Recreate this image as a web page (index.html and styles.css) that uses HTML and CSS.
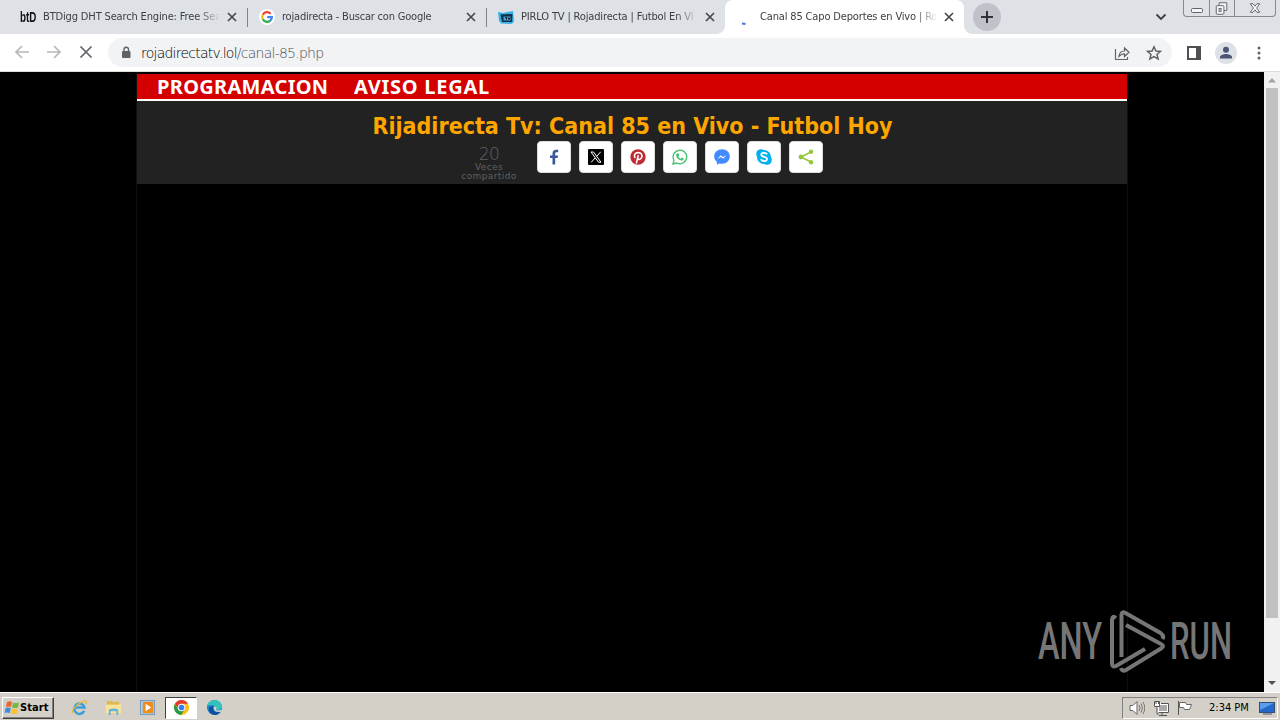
FILE: index.html
```html
<!DOCTYPE html>
<html lang="es">
<head>
    <meta charset="UTF-8">
    <meta name="viewport" content="width=device-width, initial-scale=1.0">
    <title>Canal 85 Capo Deportes en Vivo | Rojadirecta</title>
    <link rel="stylesheet" href="styles.css">
</head>
<body>
    <!-- Browser tabs -->
    <div class="tab-strip">
        <div class="tab">
            <span class="favicon favicon-bt">btD</span>
            <span class="tab-title">BTDigg DHT Search Engine: Free Sea</span>
            <svg class="tab-close" viewBox="0 0 16 16"><path d="M4 4l8 8M12 4l-8 8"/></svg>
        </div>
        <div class="tab">
            <svg class="favicon" viewBox="0 0 16 16">
                <circle cx="8" cy="8" r="8" fill="#fff"/>
                <g fill="none" stroke-width="2.3">
                    <path d="M11.6 4.8A4.8 4.8 0 0 0 3.8 5.7" stroke="#ea4335"/>
                    <path d="M3.8 5.7a4.8 4.8 0 0 0 0 4.6" stroke="#fbbc05"/>
                    <path d="M3.8 10.3a4.8 4.8 0 0 0 7.4 1.3" stroke="#34a853"/>
                    <path d="M11.2 11.6A4.8 4.8 0 0 0 12.8 8.2H8.2" stroke="#4285f4"/>
                </g>
            </svg>
            <span class="tab-title google">rojadirecta - Buscar con Google</span>
            <svg class="tab-close" viewBox="0 0 16 16"><path d="M4 4l8 8M12 4l-8 8"/></svg>
        </div>
        <div class="tab no-line">
            <svg class="favicon" viewBox="0 0 16 16">
                <path d="M0 3l5 1 10-2 1 11-3 2-10-.5-2-3z" fill="#35b0e4"/>
                <path d="M2.500 5.500l12-.5-.5 8H4z" fill="#11324c"/>
                <path d="M5.500 7.500h7v4h-7z" fill="#4aa3cf"/>
                <path d="M7 8.500h1.500v2M10 8.500l1 2 1-2" fill="none" stroke="#0d2030"/>
            </svg>
            <span class="tab-title">PIRLO TV | Rojadirecta | Futbol En Vi</span>
            <svg class="tab-close" viewBox="0 0 16 16"><path d="M4 4l8 8M12 4l-8 8"/></svg>
        </div>
        <div class="tab active">
            <svg class="favicon" viewBox="0 0 16 16"><path d="M5 14.500l3.500.5" stroke="#4a6fdc" stroke-width="2"/></svg>
            <span class="tab-title">Canal 85 Capo Deportes en Vivo | Ro</span>
            <svg class="tab-close" viewBox="0 0 16 16"><path d="M4 4l8 8M12 4l-8 8"/></svg>
        </div>
        <svg class="new-tab" viewBox="0 0 28 28"><circle cx="14" cy="14" r="14"/><path d="M8 14h12M14 8v12"/></svg>
        <svg class="tab-search" viewBox="0 0 12 12"><path d="M1.500 3.500L6 8l4.500-4.500"/></svg>
        <div class="window-buttons">
            <svg viewBox="0 0 25 17"><rect x="7.500" y="8.500" width="11" height="4" rx="1"/></svg>
            <svg viewBox="0 0 25 17"><path d="M9.500 5.500v-3h8v8h-3"/><rect x="6.500" y="5.500" width="8" height="9" rx="1"/><rect x="9.500" y="8.500" width="2" height="3"/></svg>
            <svg viewBox="0 0 42 17"><path d="M16 3.500h3l2 2.500 2-2.500h3l-3.300 4.500 3.300 4.500h-3l-2-2.500-2 2.500h-3l3.300-4.500z"/></svg>
        </div>
    </div>

    <!-- Address bar -->
    <div class="toolbar">
        <svg class="nav-icon disabled" viewBox="0 0 16 16"><path d="M15 8H2M8 2L2 8l6 6"/></svg>
        <svg class="nav-icon disabled" viewBox="0 0 16 16"><path d="M1 8h13M8 2l6 6-6 6"/></svg>
        <svg class="nav-icon" viewBox="0 0 16 16"><path d="M2.500 2.500l11 11M13.500 2.500l-11 11"/></svg>
        <div class="address">
            <svg class="lock" viewBox="0 0 10 13"><rect x="1" y="5" width="8.500" height="7" rx="1"/><path d="M3 5V3.500a2.250 2.250 0 0 1 4.500 0V5"/></svg>
            <span class="url"><b>rojadirectatv.lol</b>/canal-85.php</span>
            <svg class="bar-icon" viewBox="0 0 16 16"><path d="M1.500 4v10.500h12V12M5 11.500c.3-4 2.500-5.500 5.500-5.500V3l4.500 4.300-4.500 4.200V8.800c-2.500 0-4 .7-5.500 2.700z"/></svg>
            <svg class="bar-icon star" viewBox="0 0 16 16"><path d="M8 1.800l1.900 4.200 4.600.4-3.500 3 1.100 4.500L8 11.500l-4.100 2.400L5 9.400l-3.500-3 4.600-.4z"/></svg>
        </div>
        <svg class="side-panel" viewBox="0 0 14 14"><path d="M0 0h14v14H0zM2 2v10h7V2z" fill-rule="evenodd"/></svg>
        <svg class="profile" viewBox="0 0 22 22"><circle cx="11" cy="11" r="11" fill="#dee1e6"/><circle cx="11" cy="7.700" r="3" fill="#4b5576"/><path d="M5 16.500v-1.500c0-2 4-3 6-3s6 1 6 3v1.500z" fill="#4b5576"/></svg>
        <svg class="menu-dots" viewBox="0 0 4 14"><circle cx="2" cy="2" r="1.500"/><circle cx="2" cy="7" r="1.500"/><circle cx="2" cy="12" r="1.500"/></svg>
    </div>

    <!-- Page -->
    <div class="viewport">
        <div class="page">
            <nav class="menu">
                <a class="m1" href="#">PROGRAMACION</a>
                <a class="m2" href="#">AVISO LEGAL</a>
            </nav>
            <header class="header">
                <h1>Rijadirecta Tv: Canal 85 en Vivo - Futbol Hoy</h1>
                <div class="share">
                    <div class="count">
                        <strong>20</strong>
                        <span>Veces</span>
                        <span>compartido</span>
                    </div>
                    <a class="share-btn" href="#"><svg viewBox="0 0 16 16"><path d="M6.500 15.500V9H4V6.500h2.500V4.500C6.500 2 8 .8 10 .8h2.200v2.500h-1.500c-1.100 0-1.500.5-1.500 1.400v1.800H12L11.600 9H9.200v6.500z" fill="#3b5998"/></svg></a>
                    <a class="share-btn" href="#"><svg viewBox="0 0 16 16"><rect width="16" height="16" rx="1"/><path d="M3 3h2.500L13 13.200h-2.500zM12.700 2.800L8.700 7.300M7.200 8.900l-4 4.400" fill="none" stroke="#fff" stroke-width="1"/></svg></a>
                    <a class="share-btn" href="#"><svg viewBox="0 0 16 16"><circle cx="8" cy="8" r="7.700" fill="#bd2a33"/><path d="M5.200 9C3.300 6.500 5 3.600 8.200 3.600c3.300 0 4.400 2.500 3.400 4.900-.9 2.300-3.300 2.300-3.800 1M8.300 6.200L6.300 14.500" fill="none" stroke="#fff" stroke-width="1.600"/></svg></a>
                    <a class="share-btn" href="#"><svg viewBox="0 0 16 16"><path d="M1 15l1-3.700A6.800 6.800 0 1 1 4.800 14z" fill="none" stroke="#3ec36c" stroke-width="1.300"/><path d="M5 4.500l1.300-.2.900 2-.8 1.100c.6 1.100 1.300 1.800 2.500 2.300l.9-1.100 2 1c0 1.500-1.300 2.200-2.600 1.900-2.700-.7-5-3.100-5.100-5.300 0-.7.300-1.300.9-1.700z" fill="#3ec36c"/></svg></a>
                    <a class="share-btn" href="#"><svg viewBox="0 0 16 16"><path d="M8 .3C3.600.3.200 3.400.2 7.500c0 2.300 1 4.100 2.700 5.400v2.800l2.400-1.300c.8.200 1.700.3 2.700.3 4.400 0 7.800-3.100 7.800-7.200S12.400.3 8 .3z" fill="#448aff"/><path d="M3.500 9.700l3.300-3.500 2 1.700 3.700-1.700-3.400 3.600-2-1.700z" fill="#fff"/></svg></a>
                    <a class="share-btn" href="#"><svg viewBox="0 0 16 16"><circle cx="5" cy="5" r="4.800" fill="#00aff0"/><circle cx="11" cy="11" r="4.800" fill="#00aff0"/><circle cx="8" cy="8" r="7" fill="#00aff0"/><path d="M11 5.400C10.200 3.400 5.300 3.300 5.300 5.800c0 2.700 5.700 1.500 5.700 4.300 0 2.700-5.300 2.500-6.100.1" fill="none" stroke="#fff" stroke-width="1.900"/></svg></a>
                    <a class="share-btn" href="#"><svg viewBox="0 0 16 16"><path d="M13 3L3 8l10 5" fill="none" stroke="#95c63d" stroke-width="1.500"/><g fill="#95c63d"><circle cx="13" cy="2.800" r="2.200"/><circle cx="3" cy="8" r="2.400"/><circle cx="13" cy="13.200" r="2.200"/></g></svg></a>
                </div>
            </header>
        </div>
        <div class="scrollbar">
            <svg viewBox="0 0 16 16"><path d="M4 10.500l4-4.500 4 4.500z" fill="#a3a3a3"/></svg>
            <div class="thumb"></div>
            <svg class="down" viewBox="0 0 16 16"><path d="M4 5l4 4 4-4z" fill="#505050"/></svg>
        </div>
        <svg class="watermark" viewBox="0 0 200 66">
            <text x="3" y="51" textLength="64" lengthAdjust="spacingAndGlyphs">ANY</text>
            <g>
                <path d="M81 10q-4-3-4 2V55q0 5 4 3L110 41"/>
                <path d="M86.500 49V7q0-4 4-2l35 20q4 3 2 6"/>
                <path d="M91 17l35 19q4 2 0 4.500L91 62q-4 2-5-2"/>
            </g>
            <text x="135" y="51" textLength="62" lengthAdjust="spacingAndGlyphs">RUN</text>
        </svg>
    </div>

    <!-- Taskbar -->
    <div class="taskbar">
        <div class="start">
            <svg viewBox="0 0 16 16"><path d="M3 2q3-1.500 5 0L7 7Q5 6 2 7z" fill="#ef6530"/><path d="M9 2.500q3 1.200 6 0L14 7.500q-3 1-6 0z" fill="#75b843"/><path d="M1.700 8Q4 7 6.800 8l-1 5Q3 12 .5 13z" fill="#3e8ddd"/><path d="M7.800 8.500q3 1.200 6 0l-1 5q-3 1.200-6 0z" fill="#f7c332"/></svg>
            <span>Start</span>
        </div>
        <div class="task"><svg viewBox="0 0 18 18"><path d="M14 12.500A5.500 5.500 0 1 1 14.300 9H5" fill="none" stroke="#3aa0dc" stroke-width="2.700"/><path d="M2 15C-1 13 6 5 13 2.500c4-1.500 4 1 2.500 3" fill="none" stroke="#ecb83a" stroke-width="1.300"/></svg></div>
        <div class="task"><svg viewBox="0 0 18 18"><path d="M2 2h5l1 1h7v12H2z" fill="#e0b94e"/><path d="M1 6h16v9H1z" fill="#f8e59b"/><path d="M4 17v-6q5-2 10 0v6h-2v-4H6v4z" fill="#65b4dc"/></svg></div>
        <div class="task"><svg viewBox="0 0 18 18"><rect x="1.500" y="1.500" width="15" height="15" fill="#aacbe5" stroke="#6a9cc5"/><rect x="4" y="3" width="11" height="12" fill="#f28a1c"/><path d="M7 5l6 4-6 4z" fill="#fff"/></svg></div>
        <div class="task pressed"><svg viewBox="0 0 18 18"><circle cx="9" cy="9" r="8" fill="#fbc116"/><path d="M2.100 5A8 8 0 0 1 16 5H9L6 11z" fill="#e33b2e"/><path d="M2.100 5A8 8 0 0 0 8.500 17l4-6L5.500 11z" fill="#269b4b"/><circle cx="9" cy="9" r="4" fill="#fff"/><circle cx="9" cy="9" r="3" fill="#3b7de9"/></svg></div>
        <div class="task edge"><svg viewBox="0 0 18 18"><circle cx="9" cy="9" r="8" fill="#1687cf"/><path d="M1.500 7C3 0 15-1 17 7.500c.5 4-5 5-6.500 3.500 2-3-3-6-9-4z" fill="#35c2bd"/><path d="M8 8c-2 4 2 7 7.500 5.700C12 19 4 17 3 12c-.5-3 2-5 5-4z" fill="#124e9c"/><path d="M10 8c2 1 1 2 .5 3 1 1.500 4 1.500 6 0l-1 2.500C10 15 7 11 8.500 8z" fill="#d4d0c8"/></svg></div>
        <div class="tray">
            <svg viewBox="0 0 16 16"><path d="M1 5.500h3l4-4v13l-4-4H1z" fill="#fff" stroke="#666"/><path d="M10 5q2 3 0 6M12 3.500q3 4.500 0 9M14 2q3.500 6 0 12" fill="none" stroke="#777"/></svg>
            <svg viewBox="0 0 16 16"><rect x="5" y="4" width="10" height="8" fill="#aaa" stroke="#fff" stroke-width="2"/><path d="M4.500 9v3.500h11v-9H8M9 13v2M6 15.500h8" fill="none" stroke="#555"/><path d="M1.500 1.500h5v5h-5zM4 7v7h2M3 1v3M5.500 1v3" fill="#fff" stroke="#555"/></svg>
            <svg viewBox="0 0 16 16"><path d="M1.500 1v14" stroke="#555"/><path d="M2.500 2.500h6l1 2h5l-2 5h-5l-1-2h-4z" fill="#fff" stroke="#666"/></svg>
            <span class="clock">2:34 PM</span>
            <svg class="desktop" viewBox="0 0 16 16"><rect x=".5" y="2.500" width="15" height="10" fill="#2668c9" stroke="#315078"/><path d="M1 3h14L1 10z" fill="#5c9ced"/><path d="M4 14h9" stroke="#465b7b"/></svg>
        </div>
    </div>
</body>
</html>
```

FILE: styles.css
```css
:root {
    --chrome-gray: #dee1e6;
    --icon-gray: #5f6368;
    --menu-red: #d40000;
    --taskbar: #d4d0c8;
}

* {
    box-sizing: border-box;
    margin: 0;
    padding: 0;
}

body {
    width: 1280px;
    height: 720px;
    overflow: hidden;
    background: #000;
    font-family: "DejaVu Sans Condensed", "DejaVu Sans", sans-serif;
}

svg {
    display: block;
    flex-shrink: 0;
}

a {
    text-decoration: none;
}

/* Tabs */
.tab-strip {
    display: flex;
    height: 34px;
    padding-left: 8px;
    background: var(--chrome-gray);
}

.tab {
    display: flex;
    align-items: center;
    width: 239px;
    height: 34px;
    padding: 0 7px 0 12px;
    position: relative;
}

.tab:not(.active):not(.no-line)::after {
    content: "";
    position: absolute;
    right: -1px;
    top: 8px;
    width: 1px;
    height: 19px;
    background: #808489;
}

.tab.active {
    background: #fff;
    border-radius: 8px 8px 0 0;
}

.tab.active::before,
.tab.active::after {
    content: "";
    position: absolute;
    bottom: 0;
    width: 8px;
    height: 8px;
}

.tab.active::before {
    left: -8px;
    background: radial-gradient(circle at 0 0, transparent 7.5px, #fff 8px);
}

.tab.active::after {
    right: -8px;
    background: radial-gradient(circle at 100% 0, transparent 7.5px, #fff 8px);
}

.favicon {
    width: 16px;
    height: 16px;
    flex-shrink: 0;
}

.favicon-bt {
    font: bold 14px/16px "Liberation Sans", sans-serif;
    color: #111;
    transform: scaleX(0.7);
    transform-origin: left;
}

.tab-title {
    width: 176px;
    margin: 0 5px 0 7px;
    white-space: nowrap;
    font-size: 11px;
    line-height: 16px;
    letter-spacing: -0.15px;
    color: #3c4043;
    -webkit-mask-image: linear-gradient(to right, #000 155px, transparent 178px);
    mask-image: linear-gradient(to right, #000 155px, transparent 178px);
}

.google {
    letter-spacing: -0.2px;
}

.tab-close {
    width: 16px;
    height: 16px;
    fill: none;
    stroke: #45494d;
    stroke-width: 1.7;
}

.new-tab {
    width: 28px;
    height: 28px;
    margin: 3px 0 0 9px;
    fill: #bfc2c8;
    stroke-width: 2;
}

.new-tab path {
    stroke: #303236;
}

.tab-search {
    width: 12px;
    height: 12px;
    margin: 11px 0 0 154px;
    fill: none;
    stroke: #3c4043;
    stroke-width: 1.8;
}

.window-buttons {
    display: flex;
    height: 17px;
    margin-left: 16px;
    border: 1px solid #85888e;
    border-top: 0;
    border-radius: 0 0 4px 4px;
}

.window-buttons svg {
    height: 17px;
    width: 25px;
    fill: #f4f5f7;
    stroke: #60646b;
}

.window-buttons svg:last-child {
    width: 41px;
}

.window-buttons svg + svg {
    border-left: 1px solid #85888e;
}

/* Toolbar */
.toolbar {
    display: flex;
    align-items: center;
    height: 38px;
    padding-left: 14px;
    background: #fff;
    border-bottom: 1px solid #dcdcd6;
}

.nav-icon {
    width: 16px;
    height: 16px;
    margin: -1px 16px 0 0;
    fill: none;
    stroke: var(--icon-gray);
    stroke-width: 1.7;
}

.nav-icon.disabled {
    stroke: #b5b7ba;
}

.address {
    display: flex;
    align-items: center;
    width: 1064px;
    height: 29px;
    margin-left: -2px;
    padding: 0 10px 0 13px;
    background: #f1f3f4;
    border-radius: 15px;
}

.lock {
    width: 10px;
    height: 13px;
    fill: var(--icon-gray);
}

.lock path {
    fill: none;
    stroke: var(--icon-gray);
    stroke-width: 1.4;
}

.url {
    margin: 0 auto 0 10px;
    font-family: "DejaVu Sans", sans-serif;
    font-size: 14px;
    font-weight: 200;
    letter-spacing: -0.75px;
    color: #4d5156;
}

.url b {
    font-weight: 200;
    color: #000;
}

.bar-icon {
    width: 16px;
    height: 16px;
    fill: none;
    stroke: var(--icon-gray);
    stroke-width: 1.2;
}

.star {
    margin-left: 16px;
    stroke-width: 1.5;
}

.side-panel {
    width: 14px;
    height: 14px;
    margin-left: 15px;
    fill: #4e5054;
}

.profile {
    width: 22px;
    height: 22px;
    margin-left: 14px;
}

.menu-dots {
    width: 4px;
    height: 14px;
    margin-left: 20px;
    fill: var(--icon-gray);
}

/* Page content */
.viewport {
    display: flex;
    justify-content: space-between;
    height: 620px;
    padding-left: 136px;
    background: #000;
    position: relative;
}

.page {
    width: 992px;
    padding-top: 2px;
    border: 1px solid #0e0e0e;
    border-width: 0 1px;
}

.menu {
    display: flex;
    align-items: center;
    height: 27px;
    padding-left: 20px;
    background: var(--menu-red);
    border-bottom: 2px solid #fff;
}

.menu a {
    font-family: "Noto Sans", sans-serif;
    font-size: 20px;
    font-weight: bold;
    line-height: 25px;
    color: #fff;
    white-space: nowrap;
}

.m1 {
    width: 197px;
    letter-spacing: 0.3px;
}

.m2 {
    letter-spacing: 0.75px;
}

.header {
    height: 83px;
    padding-top: 10px;
    background: #222;
}

h1 {
    height: 30px;
    text-align: center;
    font-size: 23px;
    line-height: 30px;
    color: #ffa500;
    white-space: nowrap;
    padding-left: 1px;
}

.share {
    display: flex;
    gap: 8px;
    padding-left: 322px;
}

.count {
    display: flex;
    flex-direction: column;
    width: 60px;
    margin-right: 10px;
    padding-top: 4px;
    align-items: center;
    color: #606060;
    font-family: "DejaVu Sans", sans-serif;
    font-size: 9px;
    line-height: 9px;
    letter-spacing: 0.4px;
}

.count strong {
    font-size: 17px;
    font-weight: 200;
    line-height: 18px;
    letter-spacing: -0.5px;
}

.share-btn {
    display: flex;
    align-items: center;
    justify-content: center;
    width: 34px;
    height: 32px;
    background: #fff;
    border: 1px solid #ddd;
    border-radius: 4px;
}

.share-btn svg {
    width: 16px;
    height: 16px;
}

.scrollbar {
    display: flex;
    flex-direction: column;
    width: 16px;
    height: 620px;
    background: #f1f1f1;
}

.scrollbar svg {
    width: 16px;
    height: 16px;
}

.thumb {
    width: 12px;
    height: 530px;
    margin: 0 auto;
    background: #c1c1c1;
}

.scrollbar .down {
    margin-top: auto;
}

.watermark {
    position: absolute;
    left: 1035px;
    top: 536px;
    width: 200px;
    height: 66px;
}

.watermark text {
    font-family: Roboto, sans-serif;
    font-size: 52px;
    font-weight: 500;
    fill: #767676;
}

.watermark g {
    fill: none;
    stroke: #767676;
    stroke-width: 4;
}

/* Taskbar */
.taskbar {
    display: flex;
    align-items: center;
    height: 28px;
    padding: 2px 2px 0;
    background: var(--taskbar);
    border-top: 1px solid #fff;
    font-family: "DejaVu Sans Condensed", sans-serif;
    font-size: 11px;
    color: #000;
}

.start {
    display: flex;
    align-items: center;
    width: 52px;
    height: 22px;
    margin-right: 9px;
    padding-left: 1px;
    border: 1px solid #fff;
    border-right-color: #404040;
    border-bottom-color: #404040;
    box-shadow: inset -1px -1px #808080;
    font-weight: bold;
    letter-spacing: 0.1px;
}

.start svg {
    width: 16px;
    height: 16px;
}

.task {
    display: flex;
    align-items: center;
    justify-content: center;
    width: 32px;
    height: 22px;
    margin-right: 2px;
}

.task svg {
    width: 17px;
    height: 17px;
}

.pressed {
    background: #fff;
    border: 1px solid #404040;
    border-right-color: #fff;
    border-bottom-color: #fff;
}

.edge {
    padding-right: 2px;
}

.tray {
    display: flex;
    align-items: center;
    width: 156px;
    height: 22px;
    margin-left: auto;
    padding-left: 6px;
    border: 1px solid #808080;
    border-right-color: #fff;
    border-bottom-color: #fff;
}

.tray svg {
    width: 16px;
    height: 16px;
    margin-right: 8px;
}

.clock {
    width: 42px;
    margin-left: 8px;
    white-space: nowrap;
}

.tray .desktop {
    margin: 0 0 0 8px;
}
```
